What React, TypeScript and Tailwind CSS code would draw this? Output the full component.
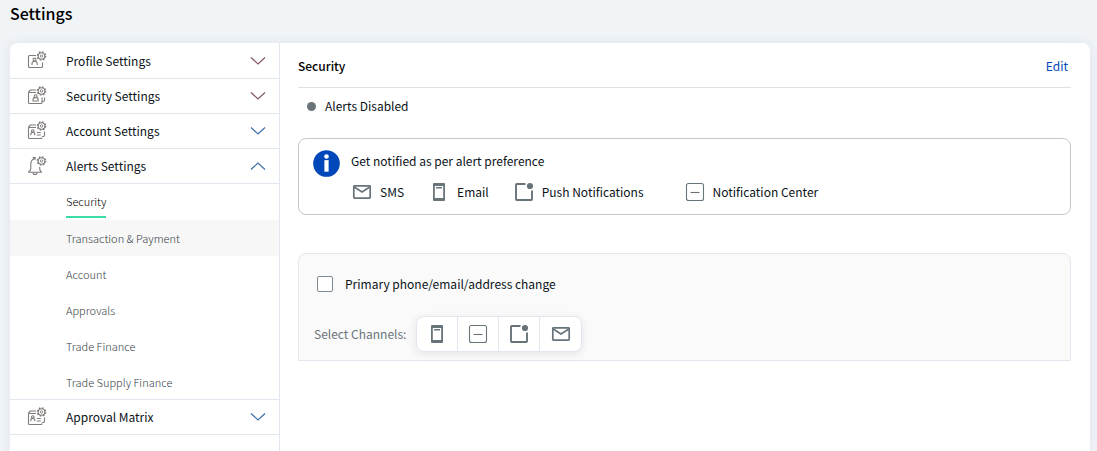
import { useState } from 'react';
import type { ReactNode } from 'react';

type IconKind = 'profile' | 'security' | 'account' | 'alerts';

interface MenuGroup {
    label: string;
    icon: IconKind;
    chevron: string;
    items?: string[];
}

const menu: MenuGroup[] = [
    { label: 'Profile Settings', icon: 'profile', chevron: 'text-[#85566c]' },
    { label: 'Security Settings', icon: 'security', chevron: 'text-[#85566c]' },
    { label: 'Account Settings', icon: 'account', chevron: 'text-[#3f6ea8]' },
    {
        label: 'Alerts Settings',
        icon: 'alerts',
        chevron: 'text-[#3f6ea8]',
        items: [
            'Security',
            'Transaction & Payment',
            'Account',
            'Approvals',
            'Trade Finance',
            'Trade Supply Finance',
        ],
    },
    { label: 'Approval Matrix', icon: 'account', chevron: 'text-[#3f6ea8]' },
];

function MenuIcon({ kind }: { kind: IconKind }) {
    return (
        <svg className="h-5 w-5 shrink-0" viewBox="0 0 20 20" fill="none" stroke="#807c7a" strokeWidth="1.1" strokeLinejoin="round" aria-hidden="true">
            <circle cx="14.5" cy="5" r="3.3" />
            <circle cx="14.5" cy="5" r="4.1" strokeWidth="1.4" strokeDasharray="1.6 1.62" />
            <circle cx="14.5" cy="5" r="1.2" strokeWidth="0.9" />
            {kind === 'profile' && (
                <>
                    <path d="M9 4.5H2.5a1 1 0 0 0-1 1v10a1 1 0 0 0 1 1h12a1 1 0 0 0 1-1V11.5" />
                    <path d="M5 14v-1.2a2.6 2.6 0 0 1 5.2 0V14" />
                    <circle cx="7.6" cy="8.6" r="1.5" />
                </>
            )}
            {kind === 'security' && (
                <>
                    <path d="M9 4H3.5L1.5 6M9 6.5H1.5v10a1 1 0 0 0 1 1H14a1 1 0 0 0 1-1V11.5" />
                    <path d="M15 15.5h1.2a1.5 1.5 0 0 0 1.3-1.5v-2.5" />
                    <path d="M6 15v-1a2.6 2.6 0 0 1 5.2 0v1z" />
                    <circle cx="8.6" cy="10.3" r="1.5" />
                </>
            )}
            {kind === 'account' && (
                <>
                    <path d="M9 4H3.5L1.5 6M9 6.5H1.5v10a1 1 0 0 0 1 1H14a1 1 0 0 0 1-1" />
                    <path d="M15 15.5h1.2a1.5 1.5 0 0 0 1.3-1.5v-3.5" />
                    <path d="M3.8 14.2v-.8a2 2 0 0 1 4 0v.8M9.8 11.5h4M9.8 14h4" />
                    <circle cx="5.8" cy="10" r="1.3" />
                </>
            )}
            {kind === 'alerts' && (
                <>
                    <path d="M9 2.6C5.5 2.8 3.8 5 3.8 8v4.5c0 1.5-.8 2.5-2.3 3.7h13c-1.2-1-1.8-2.2-1.8-3.7v-1.5" />
                    <path d="M6 16.5a2 2 0 0 0 4 0M6.3 3V1.5h2.5" />
                </>
            )}
        </svg>
    );
}

function Chevron({ open }: { open: boolean }) {
    return (
        <svg className="h-4 w-4 shrink-0" viewBox="0 0 16 16" fill="none" stroke="currentColor" strokeWidth="1.2" aria-hidden="true">
            <path d={open ? 'M1 11.5L8 5l7 6.5' : 'M1 4.5L8 11l7-6.5'} />
        </svg>
    );
}

function MailIcon() {
    return (
        <svg className="h-5 w-5 shrink-0" viewBox="0 0 20 20" fill="none" stroke="#69747a" strokeWidth="1.7" aria-hidden="true">
            <rect x="1.8" y="3.8" width="16.4" height="12.4" rx="0.6" />
            <path d="M2.2 5l7.8 5 7.8-5" />
        </svg>
    );
}

function PhoneIcon() {
    return (
        <svg className="h-5 w-5 shrink-0" viewBox="0 0 20 20" aria-hidden="true">
            <path fill="#69747a" fillRule="evenodd" d="M5 1h10a1 1 0 0 1 1 1v16a1 1 0 0 1-1 1H5a1 1 0 0 1-1-1V2a1 1 0 0 1 1-1zM5.8 4v12h8.4V4z" />
            <path fill="#69747a" d="M7 5h6v1.5H7z" />
        </svg>
    );
}

function PushIcon() {
    return (
        <svg className="h-5 w-5 shrink-0" viewBox="0 0 20 20" fill="none" stroke="#69747a" strokeWidth="1.9" aria-hidden="true">
            <path d="M11.5 2H2.7a.7.7 0 0 0-.7.7v14.6c0 .4.3.7.7.7h14.6c.4 0 .7-.3.7-.7V8.5" />
            <circle cx="16" cy="4" r="3.1" fill="#69747a" stroke="none" />
        </svg>
    );
}

function CenterIcon() {
    return (
        <svg className="h-5 w-5 shrink-0" viewBox="0 0 20 20" fill="none" stroke="#69747a" strokeWidth="1.1" aria-hidden="true">
            <rect x="1.5" y="1.5" width="17" height="17" rx="2" />
            <path d="M5.5 10.5h9" />
        </svg>
    );
}

function Channel({ icon, label }: { icon: ReactNode; label: string }) {
    return (
        <li className="flex items-center gap-2 last:ml-4">
            {icon}
            {label}
        </li>
    );
}

const channels = [
    { label: 'Email', icon: <PhoneIcon /> },
    { label: 'Notification Center', icon: <CenterIcon /> },
    { label: 'Push Notifications', icon: <PushIcon /> },
    { label: 'SMS', icon: <MailIcon /> },
];

function Sidebar() {
    const [open, setOpen] = useState('Alerts Settings');

    return (
        <nav className="w-[270px] shrink-0 border-r border-[#e2e6ef] pt-px">
            {menu.map((group) => (
                <div key={group.label}>
                    <button
                        type="button"
                        aria-expanded={open === group.label}
                        onClick={() => setOpen(open === group.label ? '' : group.label)}
                        className="flex h-[35px] w-full items-center border-b border-[#e2e6ef] pr-[13px] pl-[17px] text-left"
                    >
                        <MenuIcon kind={group.icon} />
                        <span className="ml-[19px] flex-1">{group.label}</span>
                        <span className={group.chevron}>
                            <Chevron open={open === group.label} />
                        </span>
                    </button>
                    {group.items && open === group.label && (
                        <ul className="text-[11px] font-light">
                            {group.items.map((item) => (
                                <li key={item} className="h-9 border-[#e2e6ef] last:border-b">
                                    <a
                                        href="#"
                                        className={
                                            item === 'Security'
                                                ? 'flex h-full items-center pl-14 text-black'
                                                : item === 'Transaction & Payment'
                                                  ? 'flex h-full items-center bg-[#f7f7f7] pl-14 text-[#364046]'
                                                  : 'flex h-full items-center pl-14 text-[#364046]'
                                        }
                                    >
                                        <span className={item === 'Security' ? 'border-b-2 border-[#3ddbaa] leading-[30px]' : ''}>
                                            {item}
                                        </span>
                                    </a>
                                </li>
                            ))}
                        </ul>
                    )}
                </div>
            ))}
        </nav>
    );
}

export default function App() {
    return (
        <div className="flex min-h-screen flex-col bg-[#f0f4f7] pr-[7px] pl-[10px] font-['Noto_Sans_CJK_SC','Noto_Sans',sans-serif] text-xs leading-5 text-[#0b1218]">
            <h1 className="pt-px pb-[18px] text-base leading-6 font-medium text-black">Settings</h1>
            <div className="flex flex-1 rounded-t-lg bg-white shadow-[0_0_12px_rgba(40,50,90,0.08)]">
                <Sidebar />
                <main className="min-w-0 flex-1 pr-[19px] pl-[18px]">
                    <header className="flex h-[45px] items-center justify-between border-b border-[#dfe1e4] pt-0.5 pr-[3px]">
                        <h2 className="font-medium text-black">Security</h2>
                        <a href="#" className="text-[#0047ba]">
                            Edit
                        </a>
                    </header>
                    <p className="flex items-center gap-[9px] py-2 pl-[9px]">
                        <span className="h-[9px] w-[9px] rounded-full bg-[#69747a]" />
                        Alerts Disabled
                    </p>

                    <section className="mt-[14px] flex gap-[11px] rounded-lg border border-[#c3c8cd] px-[14px] pt-[11px] pb-3">
                        <svg className="h-[27px] w-[27px] shrink-0" viewBox="0 0 28 28" aria-hidden="true">
                            <circle cx="14" cy="14" r="13.8" fill="#0047ba" />
                            <circle cx="14" cy="6.7" r="2.4" fill="#fff" />
                            <path d="M11.8 10.5h4.4v12h-4.4z" fill="#fff" />
                        </svg>
                        <div className="pt-px">
                            <p>Get notified as per alert preference</p>
                            <ul className="mt-[11px] flex gap-[25px] pl-px">
                                <Channel icon={<MailIcon />} label="SMS" />
                                <Channel icon={<PhoneIcon />} label="Email" />
                                <Channel icon={<PushIcon />} label="Push Notifications" />
                                <Channel icon={<CenterIcon />} label="Notification Center" />
                            </ul>
                        </div>
                    </section>

                    <section className="mt-[38px] rounded-t-lg border border-[#e2e6ef] bg-[#fafafa] pt-5 pb-2 pl-[15px]">
                        <label className="flex items-center gap-3 pl-[3px]">
                            <input type="checkbox" className="h-4 w-4 appearance-none rounded-xs border border-[#7d8a94] bg-white" />
                            Primary phone/email/address change
                        </label>
                        <div className="mt-[22px] flex items-center gap-[10px]">
                            <span className="text-[#69747a]">Select Channels:</span>
                            <div className="flex divide-x divide-[#e2e6ef] rounded-lg border border-[#e2e6ef] bg-white shadow-[0_2px_8px_rgba(40,50,90,0.1)]">
                                {channels.map((channel) => (
                                    <button
                                        key={channel.label}
                                        type="button"
                                        aria-label={channel.label}
                                        className="flex h-[34px] w-[41px] items-center justify-center"
                                    >
                                        {channel.icon}
                                    </button>
                                ))}
                            </div>
                        </div>
                    </section>
                </main>
            </div>
        </div>
    );
}
